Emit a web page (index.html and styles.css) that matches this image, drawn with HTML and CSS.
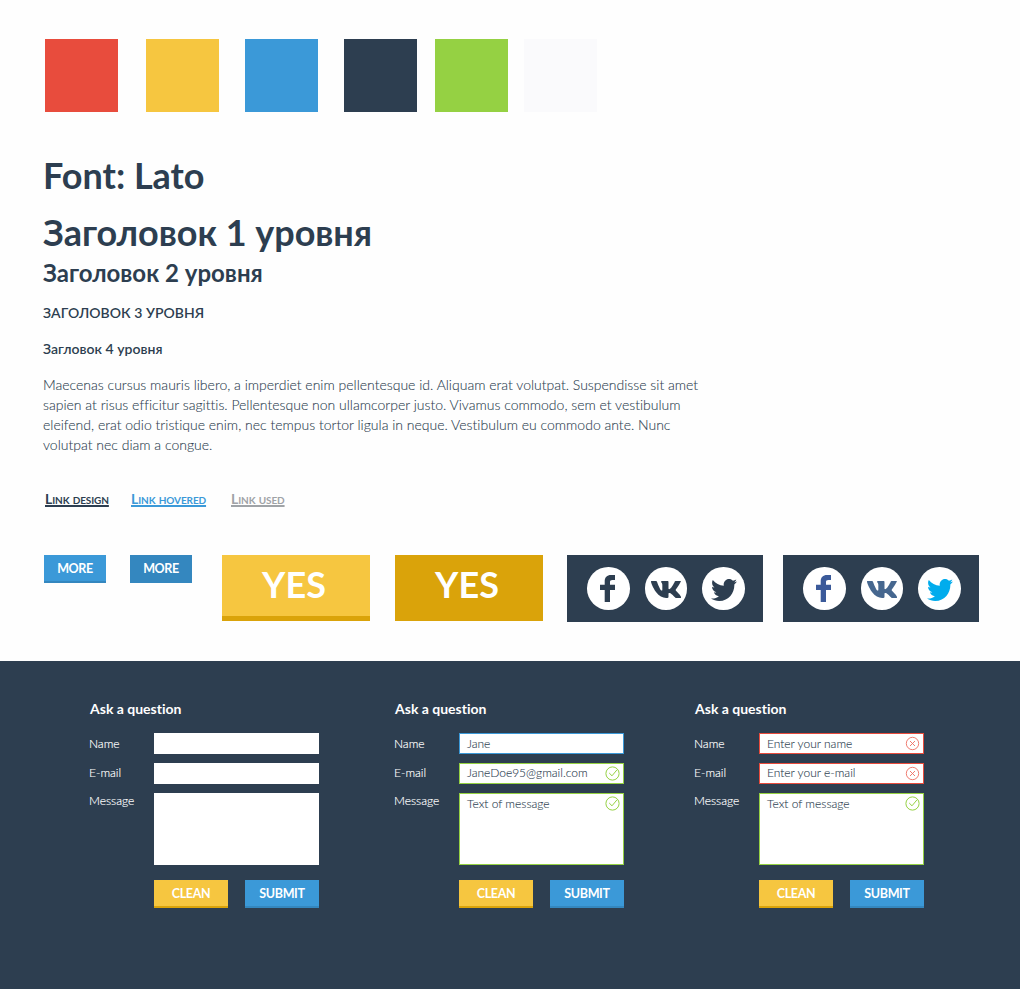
FILE: index.html
```html
<!DOCTYPE html>
<html lang="ru">
<head>
<meta charset="utf-8">
<title>UI kit</title>
<link rel="stylesheet" href="styles.css">
</head>
<body>
<svg class="defs" aria-hidden="true">
  <symbol id="fb" viewBox="0 0 15 27" preserveAspectRatio="none"><path d="M4.700 27V15H0V9.700h4.700V6.600C4.700 2.200 7 0 11 0h4v4.900h-2.600c-1.900 0-2.400.8-2.400 2.300v2.500h5V15h-5v12z"/></symbol>
  <symbol id="vk" viewBox="18.600 96 539 320" preserveAspectRatio="none"><path d="M553 96h-85c-15 0-22 8-26 17 0 0-30 73-72 120-10 11-19 18-28 18-4 0-9-4-9-17V118c0-15-4-22-17-22H214c-9 0-15 7-15 13 0 14 21 18 23 58v87c0 19-3 22-11 22-20 0-52-73-81-157-6-16-12-23-27-23H30c-11 0-13 8-11 17 4 22 26 93 93 195C160 378 229 416 291 416c37 0 42-8 42-23 0-67-3-73 16-73 9 0 24 4 59 38 40 40 46 58 69 58h64c17 0 21-8 16-25-11-35-87-107-90-112-9-11-6-16 0-26 0 0 72-101 90-157z"/></symbol>
  <symbol id="tw" viewBox="0 48 512 416" preserveAspectRatio="none"><path d="M459.370 151.716c.325 4.548.325 9.097.325 13.645 0 138.720-105.583 298.558-298.558 298.558-59.452 0-114.680-17.219-161.137-47.106 8.447.974 16.568 1.299 25.340 1.299 49.055 0 94.213-16.568 130.274-44.832-46.132-.975-84.792-31.188-98.112-72.772 6.498.974 12.995 1.624 19.818 1.624 9.421 0 18.843-1.300 27.614-3.573-48.081-9.747-84.143-51.980-84.143-102.985v-1.299c13.969 7.797 30.214 12.670 47.431 13.319-28.264-18.843-46.781-51.005-46.781-87.391 0-19.492 5.197-37.360 14.294-52.954 51.655 63.675 129.300 105.258 216.365 109.807-1.624-7.797-2.599-15.918-2.599-24.040 0-57.828 46.782-104.934 104.934-104.934 30.213 0 57.502 12.670 76.670 33.137 23.715-4.548 46.456-13.320 66.599-25.340-7.798 24.366-24.366 44.833-46.132 57.827 21.117-2.273 41.584-8.122 60.426-16.243-14.292 20.791-32.161 39.308-52.628 54.253z"/></symbol>
  <symbol id="ok" viewBox="0 0 15 15"><circle cx="7.500" cy="7.500" r="6.600"/><path d="M4.200 7 7 9.800l5-6"/></symbol>
  <symbol id="no" viewBox="0 0 15 15"><circle cx="7.500" cy="7.500" r="6.200"/><path d="m5 5 5 5m0-5-5 5"/></symbol>
</svg>

<main class="kit">
  <div class="swatches">
    <div class="swatch red"></div>
    <div class="swatch yellow"></div>
    <div class="swatch blue"></div>
    <div class="swatch navy"></div>
    <div class="swatch green"></div>
    <div class="swatch pale"></div>
  </div>

  <section class="type">
    <p class="font-name">Font: Lato</p>
    <h1>Заголовок 1 уровня</h1>
    <h2>Заголовок 2 уровня</h2>
    <h3>ЗАГОЛОВОК 3 УРОВНЯ</h3>
    <h4>Загловок 4 уровня</h4>
    <p class="copy">Maecenas cursus mauris libero, a imperdiet enim pellentesque id. Aliquam erat volutpat. Suspendisse sit amet<br>sapien at risus efficitur sagittis. Pellentesque non ullamcorper justo. Vivamus commodo, sem et vestibulum<br>eleifend, erat odio tristique enim, nec tempus tortor ligula in neque. Vestibulum eu commodo ante. Nunc<br>volutpat nec diam a congue.</p>
  </section>

  <nav class="links">
    <a class="link">Link design</a>
    <a class="link hovered">Link hovered</a>
    <a class="link used">Link used</a>
  </nav>

  <div class="controls">
    <button class="btn more">MORE</button>
    <button class="btn more pressed">MORE</button>
    <button class="yes">YES</button>
    <button class="yes pressed">YES</button>
    <div class="social">
      <a class="disc"><svg class="fb"><use href="#fb"/></svg></a>
      <a class="disc"><svg class="vk"><use href="#vk"/></svg></a>
      <a class="disc"><svg class="tw"><use href="#tw"/></svg></a>
    </div>
    <div class="social colored">
      <a class="disc"><svg class="fb"><use href="#fb"/></svg></a>
      <a class="disc"><svg class="vk"><use href="#vk"/></svg></a>
      <a class="disc"><svg class="tw"><use href="#tw"/></svg></a>
    </div>
  </div>
</main>

<footer class="forms">
  <form class="ask">
    <div class="title">Ask a question</div>
    <div class="row"><label>Name</label><div class="field"></div></div>
    <div class="row email"><label>E-mail</label><div class="field"></div></div>
    <div class="row tall"><label>Message</label><div class="field"></div></div>
    <div class="actions"><button class="btn clean" type="button">CLEAN</button><button class="btn" type="button">SUBMIT</button></div>
  </form>
  <form class="ask">
    <div class="title">Ask a question</div>
    <div class="row"><label>Name</label><div class="field focus">Jane</div></div>
    <div class="row email"><label>E-mail</label><div class="field valid">JaneDoe95@gmail.com<svg class="mark"><use href="#ok"/></svg></div></div>
    <div class="row tall"><label>Message</label><div class="field valid">Text of message<svg class="mark"><use href="#ok"/></svg></div></div>
    <div class="actions"><button class="btn clean" type="button">CLEAN</button><button class="btn" type="button">SUBMIT</button></div>
  </form>
  <form class="ask">
    <div class="title">Ask a question</div>
    <div class="row"><label>Name</label><div class="field invalid">Enter your name<svg class="mark"><use href="#no"/></svg></div></div>
    <div class="row email"><label>E-mail</label><div class="field invalid">Enter your e-mail<svg class="mark"><use href="#no"/></svg></div></div>
    <div class="row tall"><label>Message</label><div class="field valid">Text of message<svg class="mark"><use href="#ok"/></svg></div></div>
    <div class="actions"><button class="btn clean" type="button">CLEAN</button><button class="btn" type="button">SUBMIT</button></div>
  </form>
</footer>
</body>
</html>
```

FILE: styles.css
```css
* { box-sizing: border-box; }
body {
  margin: 0;
  width: 1020px;
  height: 989px;
  overflow: hidden;
  display: flex;
  flex-direction: column;
  background: #fefefe;
  color: #2d3e50;
  font-family: Lato, "Open Sans", sans-serif;
  font-variant-ligatures: none;
}
h1, h2, h3, h4, p { margin: 0; }
button { border: 0; padding: 0; font-family: inherit; color: #fff; }
.defs { position: absolute; width: 0; height: 0; }

.kit { height: 661px; padding: 39px 41px 0 43px; }

.swatches { display: flex; height: 73px; margin-left: 2px; }
.swatch { width: 73px; }
.red { background: #e84c3d; margin-right: 28px; }
.yellow { background: #f6c640; margin-right: 26px; }
.blue { background: #3b99d8; margin-right: 26px; }
.navy { background: #2d3e50; margin-right: 18px; }
.green { background: #95d143; margin-right: 16px; }
.pale { background: #fafafc; }

.type { padding-top: 41px; white-space: nowrap; }
.font-name { font-size: 36px; line-height: 44px; font-weight: 700; }
h1 { margin-top: 13px; font-size: 36px; line-height: 44px; font-weight: 700; letter-spacing: -.03px; }
h2 { margin-top: 4px; font-size: 24px; line-height: 30px; font-weight: 700; }
h3 { margin-top: 15px; font-size: 14px; line-height: 20px; font-weight: 600; letter-spacing: .05px; }
h4 { margin-top: 16px; font-size: 14px; line-height: 20px; font-weight: 600; letter-spacing: .04px; }
.copy { margin-top: 16px; font-size: 14px; line-height: 20px; font-weight: 300; -webkit-text-stroke: .1px #2d3e50; }

.links { display: flex; margin: 34px 0 0 2px; }
.link {
  width: 86px;
  font-size: 14px;
  line-height: 20px;
  font-weight: 700;
  font-variant-caps: small-caps;
  letter-spacing: -.1px;
  text-decoration: underline;
  text-decoration-thickness: 1.500px;
  text-decoration-skip-ink: none;
}
.hovered { width: 100px; color: #3b99d8; }
.used { color: #9fa3a7; }

.controls { display: flex; align-items: flex-start; margin: 46px 0 0 1px; }
.btn {
  width: 74px;
  height: 28px;
  padding-top: 1px;
  background: #3b99d8;
  border-bottom: 2px solid #3487bf;
  font-size: 12.500px;
  line-height: 25px;
  font-weight: 700;
  letter-spacing: -.35px;
}
.btn.more { width: 62px; margin-right: 24px; }
.btn.more.pressed { background: #3487bf; margin-right: 30px; }
.yes {
  width: 148px;
  height: 66px;
  margin-right: 25px;
  padding: 0 4px 2px 0;
  background: #f6c640;
  border-bottom: 5px solid #daa30a;
  font-size: 36px;
  line-height: 59px;
  font-weight: 700;
}
.yes.pressed { background: #daa30a; margin-right: 24px; }

.social {
  display: flex;
  align-items: center;
  gap: 15px;
  width: 196px;
  height: 67px;
  margin-right: 20px;
  padding-left: 20px;
  background: #2d3e50;
  fill: #2d3e50;
}
.social.colored { margin-right: 0; }
.disc {
  display: flex;
  align-items: center;
  justify-content: center;
  width: 42.700px;
  height: 42.700px;
  border-radius: 50%;
  background: #fff;
}
.fb { width: 15px; height: 27px; margin-right: 1px; }
.vk { width: 30px; height: 17px; margin: 2px 1px 0 0; }
.tw { width: 26px; height: 22px; margin: 2px 0 0 1px; }
.colored .fb { fill: #3b5a9a; }
.colored .vk { fill: #46678f; }
.colored .tw { fill: #00aced; }

.forms {
  flex: 1;
  display: grid;
  grid-template-columns: 305px 300px 230px;
  padding: 38px 0 0 89px;
  background: #2d3e50;
  color: #fff;
}
.title { padding-left: 1px; font-size: 14px; line-height: 20px; font-weight: 700; margin-bottom: 14px; }
.row { display: grid; grid-template-columns: 65px 165px; height: 21px; margin-bottom: 9px; }
.row.tall { height: 72px; margin-bottom: 15px; }
label { font-size: 12px; line-height: 21px; font-weight: 300; -webkit-text-stroke: .15px #fff; }
.email label { line-height: 19px; }
.tall label { line-height: 15px; }
.field {
  position: relative;
  padding-left: 7px;
  border: 1px solid #fff;
  background: #fff;
  color: #2d3e50;
  font-size: 12px;
  line-height: 19px;
  font-weight: 300;
  -webkit-text-stroke: .1px #2d3e50;
}
.email .field { line-height: 17px; }
.focus { border-color: #3b99d8; }
.valid { border-color: #95d143; }
.invalid { border-color: #e84c3d; }
.mark { position: absolute; right: 3px; top: 2px; width: 15px; height: 15px; fill: none; stroke-width: 1; }
.valid .mark { stroke: #95d143; }
.invalid .mark { stroke: #ed6e62; stroke-width: .9; }
.actions { display: flex; gap: 17px; margin-left: 65px; }
.clean { background: #f6c640; border-bottom-color: #daa30a; }
```
